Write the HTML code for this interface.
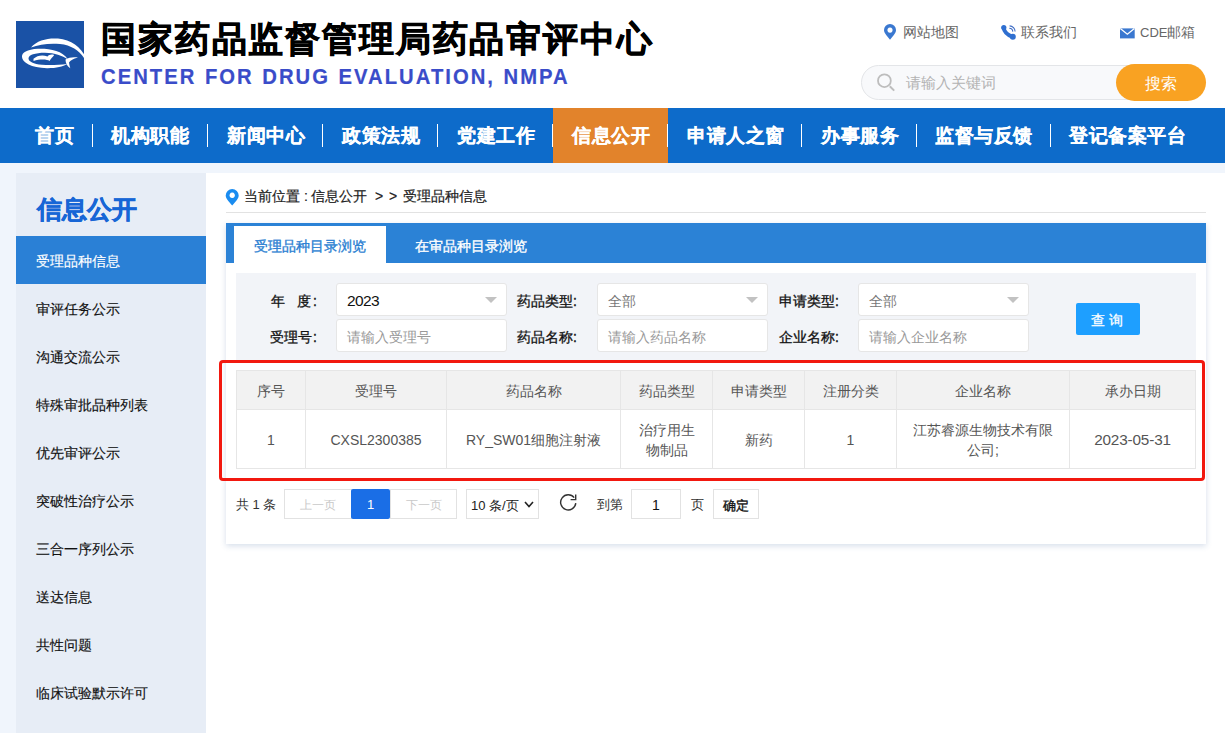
<!DOCTYPE html>
<html><head><meta charset="utf-8">
<style>
*{margin:0;padding:0;box-sizing:border-box}
html,body{width:1225px;height:733px;overflow:hidden;background:#fff;font-family:"Liberation Sans",sans-serif;color:#333}
.abs{position:absolute}
#logo{left:16px;top:21px;width:68px;height:67px;background:#1753a6}
#title{left:101px;top:15px;font-size:35px;font-weight:bold;color:#000;white-space:nowrap;letter-spacing:1.85px;line-height:48px;-webkit-text-stroke:0.7px #000}
#etitle{left:101px;top:64px;font-size:22px;font-weight:bold;color:#3a4cc9;letter-spacing:2.2px;word-spacing:1px;white-space:nowrap;line-height:26px;transform:scaleX(0.92);transform-origin:0 0;-webkit-text-stroke:0.2px #3a4cc9}
.toplink{top:22.5px;font-size:13.5px;color:#666;line-height:20px;white-space:nowrap}
#search{left:861px;top:65px;width:344px;height:35px;border:1px solid #e3e5e8;border-radius:18px;background:#f8f9fb}
#sbtn{left:1116px;top:64px;width:90px;height:37px;border-radius:19px;background:#f9a222;color:#fff;font-size:15.5px;text-align:center;line-height:40px}
#nav{left:0;top:108px;width:1225px;height:55px;background:#0d6bca}
.ni{top:0;height:54px;line-height:56px;color:#fff;font-size:19px;letter-spacing:0.6px;font-weight:bold;white-space:nowrap;-webkit-text-stroke:0.2px #fff}
.nd{top:16px;width:1px;height:23px;background:#fff}
#band{left:0;top:163px;width:1225px;height:10px;background:#f0f5fc}
#lm{left:0;top:173px;width:16px;height:560px;background:#f0f5fc}
#side{left:16px;top:173px;width:190px;height:560px;background:#e7edf6}
#stitle{left:36.5px;top:191px;font-size:25px;font-weight:bold;color:#1766d6;line-height:36px;white-space:nowrap;-webkit-text-stroke:0.5px #1766d6}
.si{left:16px;width:190px;height:48px;line-height:50px;padding-left:20px;font-size:14px;color:#111;white-space:nowrap;-webkit-text-stroke:0.15px #111}
.si.on{background:#2a80d6;color:#fff;-webkit-text-stroke:0.15px #fff}
.crumb{top:186px;font-size:14px;line-height:20px;color:#222;white-space:nowrap;-webkit-text-stroke:0.2px #222}
#cline{left:226px;top:212px;width:980px;height:1px;background:#e2e2e2}
#panel{left:226px;top:223px;width:980px;height:321px;background:#fff;box-shadow:0 2px 6px rgba(50,90,150,0.2)}
#tabbar{left:226px;top:223px;width:980px;height:40px;background:#2b82d6}
#tab1{left:234px;top:226px;width:152px;height:37px;background:#fff;color:#2b7fd2;font-size:14px;text-align:center;line-height:40px;-webkit-text-stroke:0.35px #2b7fd2}
#tab2{left:415px;top:226px;color:#fff;font-size:14px;line-height:40px;white-space:nowrap;-webkit-text-stroke:0.35px #fff}
#filter{left:236px;top:273px;width:960px;height:88px;background:#f2f4f8}
.lbl{font-size:14px;color:#111;line-height:20px;white-space:nowrap;-webkit-text-stroke:0.3px #111}
.inp{height:33px;background:#fff;border:1px solid #e6e6e6;border-radius:3px;font-size:14px;line-height:34px;padding-left:10px;color:#999;white-space:nowrap}
.tri{width:0;height:0;border-left:6px solid transparent;border-right:6px solid transparent;border-top:6px solid #c2c2c2}
#qbtn{left:1076px;top:303px;width:64px;height:32px;background:#1e9fff;border-radius:2px;color:#fff;font-size:14px;line-height:35px;letter-spacing:4px;padding-left:15px;white-space:nowrap;-webkit-text-stroke:0.3px #fff}
#redbox{left:219px;top:360px;width:986px;height:121px;border:3.3px solid #f2180f;border-radius:4px}
table{position:absolute;left:236px;top:370px;border-collapse:collapse;font-size:14px;color:#555}
td{border:1px solid #e6e6e6;text-align:center;line-height:20px;padding-top:2px}
thead td{background:#f2f2f2;height:39px}
tbody td{height:59px}
.pg{top:489px;height:30px;line-height:31px;font-size:13px;white-space:nowrap}
.pb{border:1px solid #e2e2e2;text-align:center;color:#c9c9c9;background:#fff;font-size:12px;line-height:30px}
</style></head><body>
<svg class="abs" style="left:0;top:0" width="100" height="100" viewBox="0 0 100 100">
<rect x="16" y="21" width="68" height="67" fill="#1a52a6"/>
<g fill="#fff">
<path fill-rule="evenodd" d="M68,59.5 C62,50.5 50,48.5 38,48.8 C27,49.5 21.8,52.5 22,57 C22.3,62.5 31,67.8 47,68.2 C56,68.3 63,66.5 67,64 C59,65 50,65.2 42,64.8 C33.5,64 28.5,61.5 28.5,58.5 C28.5,55 35,52.8 45,52.8 C55,53 62,55.5 68,59.5 Z"/>
<path d="M31,47.5 C37,40 48,37.8 58,38.5 C71,39.5 81,47 86,58 L84,58 C79,50.5 71,45 60,44 C49,43 39,44.5 31,47.5 Z"/>
<path d="M65.5,59.6 C69,57.5 73,56.8 78,57.6 C73,58.8 70.5,60.5 69,62.5 C69.2,64.5 69.8,66.5 70.3,68.2 C67,66.5 65.5,63 65.5,59.6 Z"/>
<path d="M33.5,58.8 C37,55.2 43,54.6 47.5,56.4 C49,54.8 51.5,54 54.2,55 C52.8,57 51,58.3 49.5,61 C47.5,59.2 40,58.8 33.5,61 Z"/>
</g>
</svg>
<div id="title" class="abs">国家药品监督管理局药品审评中心</div>
<div id="etitle" class="abs">CENTER FOR DRUG EVALUATION, NMPA</div>

<svg class="abs" style="left:880px;top:20px" width="20" height="24" viewBox="880 20 20 24"><path fill="#3a78d0" fill-rule="evenodd" d="M890,39.8 C886,35 884,32.5 884,30 A6,6 0 0 1 896,30 C896,32.5 894,35 890,39.8 Z M890,27.5 A2.6,2.6 0 1 0 890.01,27.5 Z"/></svg>
<div class="abs toplink" style="left:903px">网站地图</div>
<svg class="abs" style="left:998px;top:22px" width="20" height="20" viewBox="998 22 20 20"><path fill="none" stroke="#2f6fd0" stroke-width="4" stroke-linecap="round" d="M1003.6,27.8 Q1004.5,34 1012.6,36.9"/><circle cx="1003.8" cy="27.6" r="2.6" fill="#2f6fd0"/><circle cx="1012.8" cy="36.8" r="3" fill="#2f6fd0"/><path fill="none" stroke="#3e6cc4" stroke-width="1.1" d="M1009.3,28.2 A3.6,3.6 0 0 1 1012.8,31.6 M1009.6,25.9 A5.6,5.6 0 0 1 1015.1,31.6"/></svg>
<div class="abs toplink" style="left:1021px">联系我们</div>
<svg class="abs" style="left:1118px;top:26px" width="20" height="15" viewBox="1118 26 20 15"><rect x="1120" y="28.4" width="14.7" height="10" fill="#3a78d0"/><path d="M1120.3,28.6 L1127.35,34.2 L1134.4,28.6" fill="none" stroke="#fff" stroke-width="1.3"/></svg>
<div class="abs toplink" style="left:1140px"><span style="font-size:13px">CDE</span>邮箱</div>

<div id="search" class="abs"></div>
<svg class="abs" style="left:872px;top:70px" width="28" height="26" viewBox="872 70 28 26"><circle cx="884.4" cy="80.7" r="6.4" fill="none" stroke="#bdbdbd" stroke-width="1.8"/><path d="M889.8,86.2 L894.2,90.6" stroke="#bdbdbd" stroke-width="2"/></svg>
<div class="abs" style="left:906px;top:73px;font-size:15px;color:#b3b3b3;line-height:20px">请输入关键词</div>
<div id="sbtn" class="abs">搜索</div>

<div id="nav" class="abs">
</div>
<div class="abs" style="left:553px;top:108px;width:115px;height:55px;background:#e2832b"></div>
<div class="abs ni" style="left:35px;top:108px">首页</div>
<div class="abs nd" style="left:92px;top:124px"></div>
<div class="abs ni" style="left:111px;top:108px">机构职能</div>
<div class="abs nd" style="left:207px;top:124px"></div>
<div class="abs ni" style="left:227px;top:108px">新闻中心</div>
<div class="abs nd" style="left:322px;top:124px"></div>
<div class="abs ni" style="left:342px;top:108px">政策法规</div>
<div class="abs nd" style="left:437px;top:124px"></div>
<div class="abs ni" style="left:457px;top:108px">党建工作</div>
<div class="abs nd" style="left:552px;top:124px"></div>
<div class="abs ni" style="left:572px;top:108px">信息公开</div>
<div class="abs nd" style="left:667px;top:124px"></div>
<div class="abs ni" style="left:687px;top:108px">申请人之窗</div>
<div class="abs nd" style="left:801px;top:124px"></div>
<div class="abs ni" style="left:821px;top:108px">办事服务</div>
<div class="abs nd" style="left:916px;top:124px"></div>
<div class="abs ni" style="left:935px;top:108px">监督与反馈</div>
<div class="abs nd" style="left:1050px;top:124px"></div>
<div class="abs ni" style="left:1069px;top:108px">登记备案平台</div>

<div id="band" class="abs"></div>
<div id="lm" class="abs"></div>
<div id="side" class="abs"></div>
<div id="stitle" class="abs">信息公开</div>
<div class="abs si on" style="top:236px">受理品种信息</div>
<div class="abs si" style="top:284px">审评任务公示</div>
<div class="abs si" style="top:332px">沟通交流公示</div>
<div class="abs si" style="top:380px">特殊审批品种列表</div>
<div class="abs si" style="top:428px">优先审评公示</div>
<div class="abs si" style="top:476px">突破性治疗公示</div>
<div class="abs si" style="top:524px">三合一序列公示</div>
<div class="abs si" style="top:572px">送达信息</div>
<div class="abs si" style="top:620px">共性问题</div>
<div class="abs si" style="top:668px">临床试验默示许可</div>

<svg class="abs" style="left:222px;top:186px" width="20" height="22" viewBox="222 186 20 22"><path fill="#1a8cf0" fill-rule="evenodd" d="M232.2,205.5 C228.5,201 225.7,198.5 225.7,195.5 A6.5,6.5 0 0 1 238.7,195.5 C238.7,198.5 236,201 232.2,205.5 Z M232.2,192.6 A2.7,2.7 0 1 0 232.21,192.6 Z"/></svg>
<div class="abs crumb" style="left:244px">当前位置</div>
<div class="abs crumb" style="left:304px">:</div>
<div class="abs crumb" style="left:311px">信息公开</div>
<div class="abs crumb" style="left:375px">&gt;</div>
<div class="abs crumb" style="left:389px">&gt;</div>
<div class="abs crumb" style="left:403px">受理品种信息</div>
<div id="cline" class="abs"></div>
<div id="panel" class="abs"></div>
<div id="tabbar" class="abs"></div>
<div id="tab1" class="abs">受理品种目录浏览</div>
<div id="tab2" class="abs">在审品种目录浏览</div>
<div id="filter" class="abs"></div>

<div class="abs lbl" style="left:271px;top:290.5px">年</div><div class="abs lbl" style="left:297px;top:290.5px">度</div><div class="abs lbl" style="left:313px;top:290.5px">:</div>
<div class="abs lbl" style="left:270px;top:326.5px">受理号</div><div class="abs lbl" style="left:313px;top:326.5px">:</div>
<div class="abs inp" style="left:336px;top:283px;width:171px;color:#111"><span style="font-size:15.5px;letter-spacing:-0.6px">2023</span></div>
<div class="abs tri" style="left:485px;top:297px"></div>
<div class="abs inp" style="left:336px;top:319px;width:171px">请输入受理号</div>

<div class="abs lbl" style="left:517px;top:290.5px">药品类型:</div>
<div class="abs lbl" style="left:517px;top:326.5px">药品名称:</div>
<div class="abs inp" style="left:597px;top:283px;width:171px;color:#777">全部</div>
<div class="abs tri" style="left:746px;top:297px"></div>
<div class="abs inp" style="left:597px;top:319px;width:171px">请输入药品名称</div>

<div class="abs lbl" style="left:779px;top:290.5px">申请类型:</div>
<div class="abs lbl" style="left:779px;top:326.5px">企业名称:</div>
<div class="abs inp" style="left:858px;top:283px;width:171px;color:#777">全部</div>
<div class="abs tri" style="left:1007px;top:297px"></div>
<div class="abs inp" style="left:858px;top:319px;width:171px">请输入企业名称</div>

<div id="qbtn" class="abs">查询</div>

<div id="redbox" class="abs"></div>
<table>
<thead><tr>
<td style="width:69px">序号</td><td style="width:141px">受理号</td><td style="width:174px">药品名称</td><td style="width:92px">药品类型</td><td style="width:92px">申请类型</td><td style="width:92px">注册分类</td><td style="width:173px">企业名称</td><td style="width:126px">承办日期</td>
</tr></thead>
<tbody><tr>
<td>1</td><td>CXSL2300385</td><td>RY_SW01细胞注射液</td><td>治疗用生<br>物制品</td><td>新药</td><td>1</td><td>江苏睿源生物技术有限<br>公司;</td><td><span style="font-size:15.3px;letter-spacing:-0.15px">2023-05-31</span></td>
</tr></tbody>
</table>

<div class="abs pg" style="left:236px;color:#333">共 1 条</div>
<div class="abs pg pb" style="left:284px;width:68px">上一页</div>
<div class="abs pg" style="left:351px;width:39px;background:#1a6ee6;color:#fff;text-align:center;line-height:31px;border-radius:2px">1</div>
<div class="abs pg pb" style="left:390px;width:67px">下一页</div>
<div class="abs pg" style="left:466px;width:73px;border:1px solid #e2e2e2;color:#222;padding-left:4px">10 条/页</div>
<svg class="abs" style="left:520px;top:497px" width="18" height="14" viewBox="520 497 18 14"><path d="M525,502 L529,506.5 L533,502" fill="none" stroke="#222" stroke-width="1.6"/></svg>
<svg class="abs" style="left:556px;top:490px" width="24" height="24" viewBox="556 490 24 24"><path d="M575.8,503.2 A7.6,7.6 0 1 1 574.2,497.6" fill="none" stroke="#333" stroke-width="1.4"/><path d="M575.7,494.6 L575.7,499.6 L570.6,499.6" fill="none" stroke="#333" stroke-width="1.4"/></svg>
<div class="abs pg" style="left:597px;color:#333">到第</div>
<div class="abs pg" style="left:631px;width:50px;border:1px solid #e2e2e2;text-align:center;color:#111;line-height:30px;font-size:14px">1</div>
<div class="abs pg" style="left:691px;color:#333">页</div>
<div class="abs pg" style="left:713px;width:46px;border:1px solid #e2e2e2;text-align:center;color:#111;font-size:12.5px;line-height:32px;-webkit-text-stroke:0.35px #111">确定</div>
</body></html>
